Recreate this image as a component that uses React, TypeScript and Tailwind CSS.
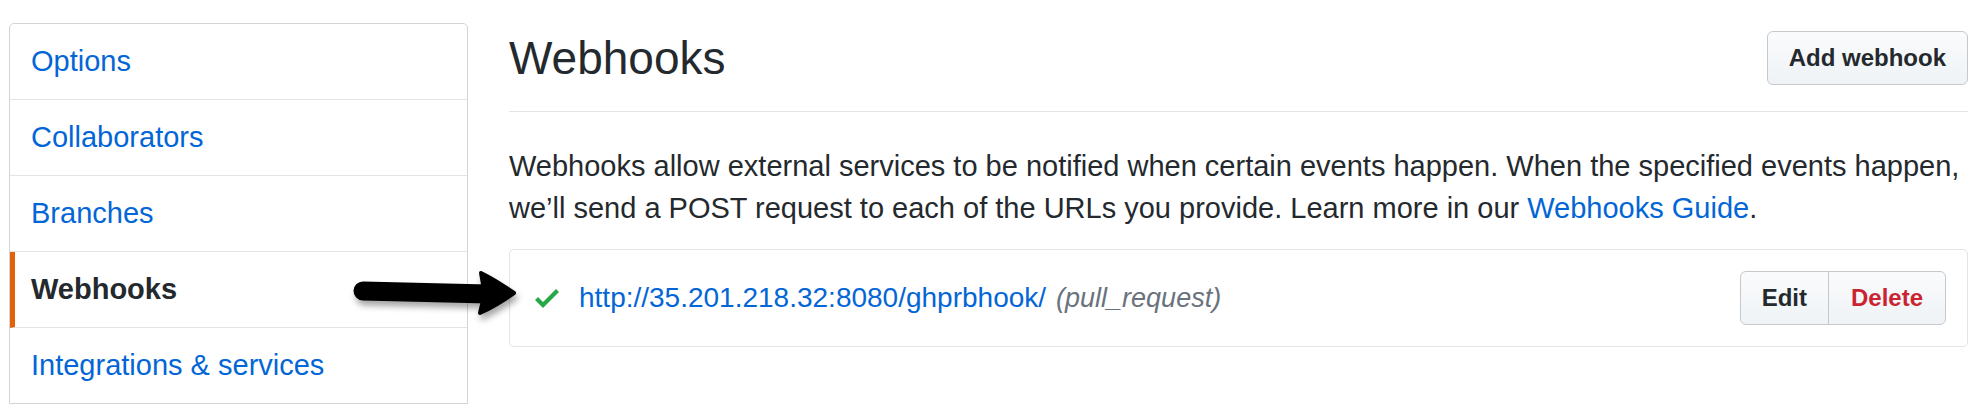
import React from "react";

const items = [
  { label: "Options", active: false },
  { label: "Collaborators", active: false },
  { label: "Branches", active: false },
  { label: "Webhooks", active: true },
  { label: "Integrations & services", active: false },
];

function Arrow() {
  return (
    <svg
      className="absolute left-[340px] top-[262px] pointer-events-none"
      width="200"
      height="70"
      viewBox="340 262 200 70"
    >
      <defs>
        <filter id="sh" x="-20%" y="-40%" width="140%" height="200%">
          <feDropShadow dx="2" dy="5" stdDeviation="3" floodColor="#000" floodOpacity="0.35" />
        </filter>
      </defs>
      <g filter="url(#sh)">
        <line x1="363" y1="291" x2="488" y2="294" stroke="#000" strokeWidth="19" strokeLinecap="round" />
        <path
          d="M481 273 Q497 281 514 293 Q497 305 480 313 Q486 293 481 273 Z"
          fill="#000"
          stroke="#000"
          strokeWidth="4"
          strokeLinejoin="round"
        />
      </g>
    </svg>
  );
}

function Check() {
  return (
    <svg width="24" height="32" viewBox="0 0 12 16" className="shrink-0">
      <path fillRule="evenodd" d="M12 5l-8 8-4-4 1.5-1.5L4 10l6.5-6.5L12 5z" fill="#28a745" />
    </svg>
  );
}

export default function App() {
  return (
    <div className="relative w-[1986px] h-[404px] overflow-hidden bg-white font-['Liberation_Sans',Arial,sans-serif] text-[#24292e]">
      <div className="flex pl-[9px]">
        <nav className="mt-[23px] w-[459px] shrink-0 border border-[#d1d5da] rounded-t-[5px] bg-white">
          {items.map((it, i) => (
            <div
              key={it.label}
              className={
                "flex items-center text-[29px] " +
                (i < items.length - 1 ? "h-[76px] border-b border-b-[#e1e4e8] " : "h-[75px] ") +
                (it.active
                  ? "border-l-[5px] border-l-[#e36209] pl-[16px] font-bold text-[#24292e]"
                  : "pl-[21px] text-[#0366d6]")
              }
            >
              {it.label}
            </div>
          ))}
        </nav>

        <main className="ml-[41px] w-[1459px] shrink-0">
          <div className="flex items-center justify-between pt-[31px] pb-[26px] border-b border-[#e1e4e8]">
            <h2 className="text-[46px] leading-[54px] font-normal">Webhooks</h2>
            <button className="h-[54px] px-[21px] rounded-[6px] border border-[#c5c8cc] bg-linear-to-b from-[#fafbfc] to-[#eff3f6] text-[24px] font-bold text-[#24292e]">
              Add webhook
            </button>
          </div>

          <p className="mt-[33px] text-[29px] leading-[42px] whitespace-nowrap">
            Webhooks allow external services to be notified when certain events happen. When the specified events happen,
            <br />
            we’ll send a POST request to each of the URLs you provide. Learn more in our{" "}
            <span className="text-[#0366d6]">Webhooks Guide</span>.
          </p>

          <div className="mt-[20px] h-[98px] border border-[#e1e4e8] rounded-[5px] flex items-center pl-[25px] pr-[21px]">
            <Check />
            <span className="ml-[20px] text-[28px] text-[#0366d6] whitespace-nowrap">
              http://35.201.218.32:8080/ghprbhook/
            </span>
            <span className="ml-[10px] text-[27px] italic text-[#6a737d] whitespace-nowrap">(pull_request)</span>
            <div className="flex-1" />
            <div className="flex h-[54px] rounded-[6px] border border-[#c5c8cc] bg-linear-to-b from-[#fafbfc] to-[#eff3f6] overflow-hidden">
              <button className="px-[21px] text-[24px] font-bold text-[#24292e] border-r border-[#c5c8cc]">Edit</button>
              <button className="px-[22px] text-[24px] font-bold text-[#cb2431]">Delete</button>
            </div>
          </div>
        </main>
      </div>
      <Arrow />
    </div>
  );
}
